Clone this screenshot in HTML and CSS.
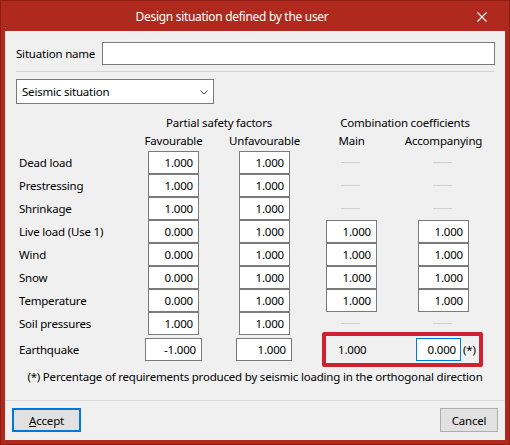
FILE: index.html
```html
<!DOCTYPE html>
<html>
<head>
<meta charset="utf-8">
<link rel="stylesheet" href="styles.css">
</head>
<body>
<div class="window">
  <div class="titlebar">
    <div class="title">Design situation defined by the user</div>
    <div class="close">
      <svg width="10" height="10" viewBox="0 0 10 10"><path d="M0.5 0.5 L9.5 9.5 M9.5 0.5 L0.5 9.5" stroke="#fff" stroke-width="1.1" fill="none"/></svg>
    </div>
  </div>
  <div class="client">
    <div class="name-row">
      <span class="name-label">Situation name</span>
      <div class="text-input"></div>
    </div>
    <div class="separator"></div>
    <div class="select">
      <span>Seismic situation</span>
      <svg width="8" height="5" viewBox="0 0 8 5"><path d="M0.5 0.5 L4 4 L7.5 0.5" stroke="#444" stroke-width="1" fill="none"/></svg>
    </div>

    <div class="grid">
      <div class="group group-psf">Partial safety factors</div>
      <div class="group group-cc">Combination coefficients</div>

      <div class="hdr c2"><span>Favourable</span></div>
      <div class="hdr c3"><span>Unfavourable</span></div>
      <div class="hdr c4"><span>Main</span></div>
      <div class="hdr c5"><span>Accompanying</span></div>

      <div class="lbl">Dead load</div>
      <div class="cell"><div class="num">1.000</div></div>
      <div class="cell"><div class="num">1.000</div></div>
      <div class="cell"><div class="dash"></div></div>
      <div class="cell"><div class="dash"></div></div>

      <div class="lbl">Prestressing</div>
      <div class="cell"><div class="num">1.000</div></div>
      <div class="cell"><div class="num">1.000</div></div>
      <div class="cell"><div class="dash"></div></div>
      <div class="cell"><div class="dash"></div></div>

      <div class="lbl">Shrinkage</div>
      <div class="cell"><div class="num">1.000</div></div>
      <div class="cell"><div class="num">1.000</div></div>
      <div class="cell"><div class="dash"></div></div>
      <div class="cell"><div class="dash"></div></div>

      <div class="lbl">Live load (Use 1)</div>
      <div class="cell"><div class="num">0.000</div></div>
      <div class="cell"><div class="num">1.000</div></div>
      <div class="cell"><div class="num">1.000</div></div>
      <div class="cell"><div class="num">1.000</div></div>

      <div class="lbl">Wind</div>
      <div class="cell"><div class="num">0.000</div></div>
      <div class="cell"><div class="num">1.000</div></div>
      <div class="cell"><div class="num">1.000</div></div>
      <div class="cell"><div class="num">1.000</div></div>

      <div class="lbl">Snow</div>
      <div class="cell"><div class="num">0.000</div></div>
      <div class="cell"><div class="num">1.000</div></div>
      <div class="cell"><div class="num">1.000</div></div>
      <div class="cell"><div class="num">1.000</div></div>

      <div class="lbl">Temperature</div>
      <div class="cell"><div class="num">0.000</div></div>
      <div class="cell"><div class="num">1.000</div></div>
      <div class="cell"><div class="num">1.000</div></div>
      <div class="cell"><div class="num">1.000</div></div>

      <div class="lbl">Soil pressures</div>
      <div class="cell"><div class="num">1.000</div></div>
      <div class="cell"><div class="num">1.000</div></div>
      <div class="cell"><div class="dash"></div></div>
      <div class="cell"><div class="dash"></div></div>
    </div>

    <div class="quake-row">
      <div class="lbl">Earthquake</div>
      <div class="cell"><div class="num wide">-1.000</div></div>
      <div class="cell"><div class="num wide2">1.000</div></div>
      <div class="highlight">
        <span class="plain">1.000</span>
        <div class="num focus">0.000</div>
        <span class="star">(*)</span>
      </div>
    </div>

    <div class="footnote">(*) Percentage of requirements produced by seismic loading in the orthogonal direction</div>

    <div class="footer">
      <div class="btn btn-default"><span class="u">A</span>ccept</div>
      <div class="btn">Cancel</div>
    </div>
  </div>
</div>
</body>
</html>
```

FILE: styles.css
```css
* { box-sizing: border-box; }
html, body { margin: 0; padding: 0; }
body {
  width: 510px;
  height: 445px;
  overflow: hidden;
  font-family: "Noto Sans", "Liberation Sans", sans-serif;
  font-size: 11.5px;
  letter-spacing: -0.2px;
  color: #000;
}
.window {
  width: 510px;
  height: 445px;
  background: #b0291f;
  border: 1px solid #8d1d15;
  display: flex;
  flex-direction: column;
}
.titlebar {
  height: 30px;
  display: flex;
  align-items: center;
  color: #fff;
  flex: none;
}
.title {
  flex: 1;
  text-align: center;
  padding-left: 4px;
  padding-top: 1px;
  font-size: 12px;
  letter-spacing: -0.3px;
}
.close {
  width: 50px;
  height: 30px;
  display: flex;
  align-items: center;
  justify-content: center;
  padding-top: 2px;
  padding-right: 4px;
}
.client {
  flex: 1;
  margin: 0 4px 4px 4px;
  background: #f0f0f0;
  display: flex;
  flex-direction: column;
  padding: 11px 10px 0 11px;
}
.name-row {
  display: flex;
  align-items: center;
  height: 23px;
}
.name-label {
  width: 86px;
  flex: none;
}
.text-input {
  flex: 1;
  height: 23px;
  background: #fff;
  border: 1px solid #7a7a7a;
}
.separator {
  margin-top: 6px;
  height: 1px;
  background: #d2d2d2;
  margin-right: 1px;
}
.select {
  margin-top: 7px;
  width: 198px;
  height: 25px;
  background: #fff;
  border: 1px solid #7a7a7a;
  display: flex;
  align-items: center;
  justify-content: space-between;
  padding: 0 5px 0 5px;
}
.select svg { margin-top: 1px; }

.grid {
  margin-top: 11px;
  margin-left: 3px;
  display: grid;
  grid-template-columns: 129px 91px 87px 92px 72px;
  grid-auto-rows: 23px;
  grid-template-rows: 17px 19px;
}
.group {
  line-height: 16px;
  white-space: nowrap;
  display: flex;
  justify-content: center;
}
.group-psf { grid-column: 2 / 4; width: 142px; }
.group-cc { grid-column: 4 / 6; width: 158px; }
.hdr {
  width: 51px;
  display: flex;
  justify-content: center;
  white-space: nowrap;
  line-height: 16px;
  align-self: start;
  height: 17px;
  align-items: center;
}
.hdr.c2 { grid-column: 2; }
.hdr.c3 { grid-column: 3; }
.hdr.c4 { grid-column: 4; }
.hdr.c5 { grid-column: 5; }
.lbl {
  grid-column: 1;
  display: flex;
  align-items: center;
  white-space: nowrap;
}
.cell {
  display: flex;
  align-items: center;
}
.num {
  width: 51px;
  height: 23px;
  background: #fff;
  border: 1px solid #7a7a7a;
  text-align: right;
  padding-right: 5px;
  line-height: 21px;
}
.dash {
  width: 19px;
  height: 1px;
  background: #d0d0d0;
  margin-left: 15px;
}

.quake-row {
  margin-top: -3px;
  margin-left: 3px;
  height: 35px;
  display: grid;
  grid-template-columns: 129px 91px 87px 164px;
  align-items: center;
}
.num.wide { width: 57px; margin-left: -3px; }
.num.wide2 { width: 56px; margin-left: -3px; }
.highlight {
  margin-left: -4px;
  width: 161px;
  height: 35px;
  border: 4px solid #cf2130;
  border-radius: 2px;
  display: flex;
  align-items: center;
  padding-left: 12px;
}
.plain {
  width: 78px;
  flex: none;
}
.num.focus {
  width: 45px;
  border-color: #0078d7;
  padding-right: 4px;
}
.star { margin-left: 2px; }

.footnote {
  margin-top: 2px;
  text-align: center;
  line-height: 16px;
  margin-left: -11px;
  margin-right: -10px;
}
.footer {
  margin-top: auto;
  margin-left: -11px;
  margin-right: -10px;
  height: 40px;
  border-top: 1px solid #dadada;
  display: flex;
  justify-content: space-between;
  align-items: flex-start;
  padding: 7px 7px 0 7px;
}
.btn {
  height: 24px;
  width: 58px;
  background: #e1e1e1;
  border: 1px solid #adadad;
  display: flex;
  align-items: center;
  justify-content: center;
}
.btn-default {
  width: 69px;
  border: 2px solid #0078d7;
}
.u { text-decoration: underline; }
```
